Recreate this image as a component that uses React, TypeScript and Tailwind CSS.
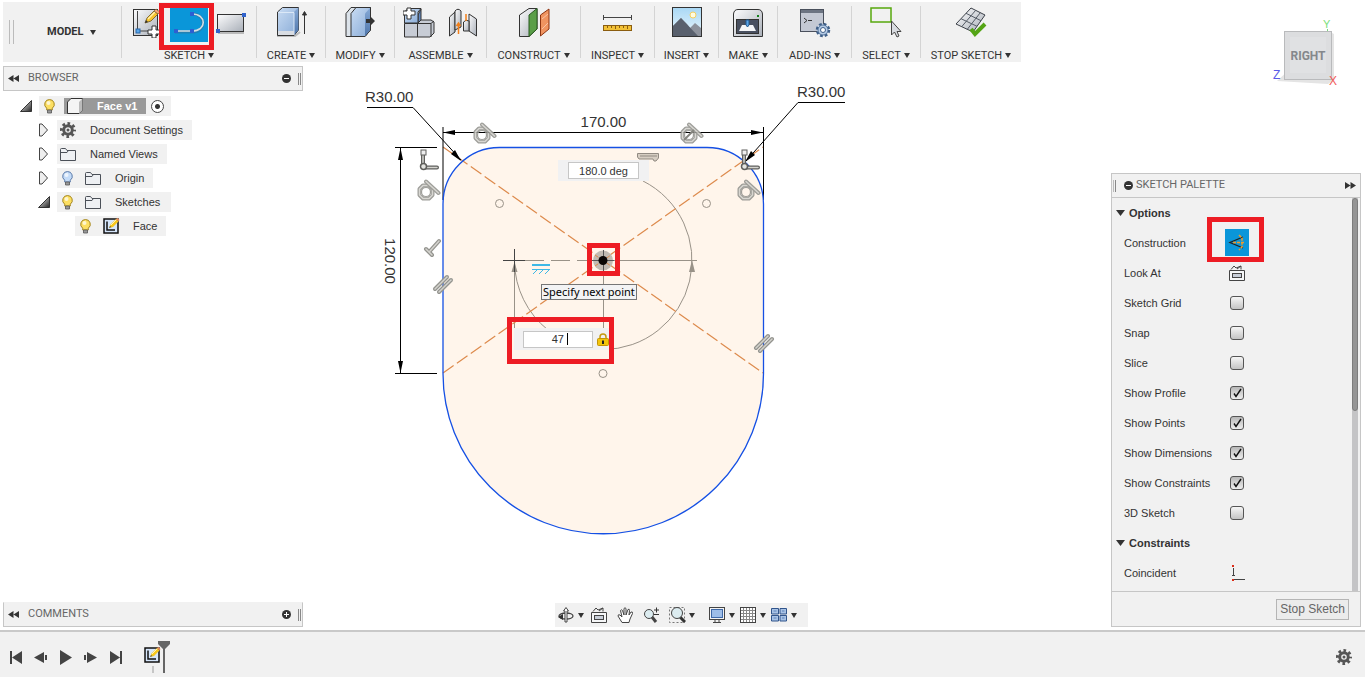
import type { ReactNode } from "react";

function Caret() {
  return (
    <svg width="6" height="5" viewBox="0 0 6 5" className="shrink-0">
      <path d="M0 0H6L3 5Z" fill="#333" />
    </svg>
  );
}

function Gradients() {
  return (
    <svg width="0" height="0" className="absolute">
      <defs>
        <linearGradient id="steel" x1="0" y1="0" x2="1" y2="1">
          <stop offset="0" stopColor="#fdfdfe" />
          <stop offset="1" stopColor="#a9afb8" />
        </linearGradient>
        <linearGradient id="blue" x1="0" y1="0" x2="1" y2="1">
          <stop offset="0" stopColor="#c9dcf3" />
          <stop offset="1" stopColor="#87aad6" />
        </linearGradient>
        <linearGradient id="blueSide" x1="0" y1="0" x2="0" y2="1">
          <stop offset="0" stopColor="#86a9d6" />
          <stop offset="1" stopColor="#4f76ab" />
        </linearGradient>
        <linearGradient id="dark" x1="0" y1="0" x2="1" y2="1">
          <stop offset="0" stopColor="#fff" />
          <stop offset="1" stopColor="#222" />
        </linearGradient>
        <linearGradient id="sky" x1="0" y1="0" x2="0" y2="1">
          <stop offset="0" stopColor="#a9d8f5" />
          <stop offset="1" stopColor="#eaf6fc" />
        </linearGradient>
      </defs>
    </svg>
  );
}

function Pencil() {
  return (
    <g>
      <path d="M0 12L2 7L9 0L13 3L6 10Z" fill="#f7c52d" stroke="#6b5320" strokeWidth=".8" />
      <path d="M3 8L10 1" stroke="#fff0b0" strokeWidth="1.4" />
      <path d="M9 0L11 -2L15 1L13 3Z" fill="#f2a877" stroke="#6b5320" strokeWidth=".6" />
      <path d="M0 12L1 9L3 11Z" fill="#333" />
    </g>
  );
}

function NewSketchIcon() {
  return (
    <svg width="28" height="32" viewBox="0 0 28 32" className="shrink-0">
      <rect x="1.5" y="3.5" width="24" height="26" fill="url(#steel)" stroke="#333" />
      <path d="M5.500 5V25H18" fill="none" stroke="#444" />
      <rect x="4" y="23" width="4" height="4" fill="#58a6ea" stroke="#2866a8" />
      <g transform="translate(13 5)"><Pencil /></g>
      <path d="M20 20h4v4h4v4h-4v4h-4v-4h-4v-4h4z" fill="#fff" stroke="#333" />
    </svg>
  );
}

function LineIcon() {
  return (
    <svg width="38" height="34" viewBox="0 0 38 34">
      <path d="M5 24H23C36 24 37 6 22 6" fill="none" stroke="#44627a" strokeWidth="3" opacity=".4" />
      <path d="M5 23H22C37 23 37 6 22 6" fill="none" stroke="#d5dde2" strokeWidth="1.6" />
      <g fill="#2d5fd2">
        <rect x="4" y="21" width="4" height="4" />
        <rect x="20" y="21" width="4" height="4" />
        <rect x="20" y="4" width="4" height="4" />
      </g>
    </svg>
  );
}

function RectangleIcon() {
  return (
    <svg width="30" height="32" viewBox="0 0 30 32" className="shrink-0">
      <rect x="2" y="26" width="26" height="2" fill="#bbb" />
      <rect x="1.500" y="8.500" width="26" height="17" fill="url(#steel)" stroke="#333" />
      <rect x="0" y="23" width="4" height="4" fill="#3163cc" />
      <rect x="26" y="7" width="4" height="4" fill="#3163cc" />
    </svg>
  );
}

const createIcon = (
  <>
    <path d="M2 30H20L25 26" stroke="#bbb" strokeWidth="2" fill="none" />
    <path d="M2.500 6L7.500 1.500H23.500V24L19 29.500H2.500Z" fill="url(#blue)" stroke="#333" />
    <path d="M19 6L23.500 1.500V24L19 29Z" fill="url(#blueSide)" />
    <path d="M3 6.500H19V29" fill="none" stroke="#dbe8f7" />
    <path d="M3 25H19V29H3Z" fill="#d9dde3" />
    <path d="M29.500 28V6M27.500 9L29.500 5.500L31.500 9Z" stroke="#333" fill="#333" />
  </>
);

const modifyIcon = (
  <>
    <path d="M2 7.500L7 1.500H26.500V24L21 30.500H2Z" fill="#dce3ea" stroke="#333" />
    <path d="M7 7.500L12 1.500H26.500V24L21 30.500H7Z" fill="url(#blue)" stroke="#333" />
    <path d="M21 7.500L26 2V24L21 30Z" fill="url(#blueSide)" />
    <path d="M22 13H26V10L31 15L26 20V17H22Z" fill="#333" />
  </>
);

const assembleIcon = (
  <>
    <path d="M1.500 17.500L5 14H28L31 16V27L27 31H1.500Z" fill="#c7ccd5" stroke="#333" />
    <path d="M14.500 17.500H28L31 15M14.500 17V31M28 18V31M2 17.500H14" fill="none" stroke="#333" />
    <path d="M15 17V9L18 3V14Z" fill="#6389bf" stroke="#333" />
    <path d="M1.500 6L5 2.500H18L15 6V17H1.500Z" fill="url(#blue)" stroke="#333" />
    <path d="M4 2h4v3h4v4H8v4H4V9H0V5h4z" fill="#fff" stroke="#333" />
  </>
);

const jointIcon = (
  <>
    <path d="M2.500 11L8 6V26L2.500 30Z" fill="url(#steel)" stroke="#333" />
    <path d="M8 5Q11 1.500 14 5V21L8 24Z" fill="url(#steel)" stroke="#333" />
    <path d="M22 8L29.500 13V30L22 25Z" fill="url(#steel)" stroke="#333" />
    <path d="M16.500 16Q19 13 22 15V25H16.500Z" fill="url(#steel)" stroke="#333" />
    <path d="M11.500 28V17M9.500 20L11.500 17L13.500 20M19 15V8" stroke="#f27f19" strokeWidth="1.500" fill="none" />
  </>
);

const constructIcon = (
  <>
    <path d="M1.500 9L11 2.500H19V23L11 30.500H1.500Z" fill="url(#steel)" stroke="#333" />
    <path d="M11 9L19 2.500V23L11 30.500Z" fill="#5a9e48" stroke="#285a20" />
    <path d="M22.500 9L31 3V23L22.500 30Z" fill="#f09460" stroke="#8e3512" />
    <path d="M24 13L30 8M24 23L30 17" stroke="#f9c3a4" />
  </>
);

const inspectIcon = (
  <>
    <path d="M1.500 9V14M29.500 9V14M2 11.500H29" stroke="#444" />
    <rect x="1.500" y="19.500" width="28" height="5" fill="#f2c136" stroke="#8b5d10" />
    <path d="M5.500 20v2M9.500 20v2M13.500 20v3M17.500 20v2M21.500 20v2M25.500 20v3" stroke="#8b5d10" />
  </>
);

const insertIcon = (
  <>
    <rect x="1.500" y="1.500" width="29" height="29" fill="url(#sky)" stroke="#333" />
    <circle cx="22" cy="9" r="3" fill="#fffbe0" stroke="#f5cf62" />
    <path d="M2 20L10 12L16 18L19 22L24 17L30 22V30H2Z" fill="#8d929c" />
    <path d="M2 20L10 12L27 30H2Z" fill="#59606d" />
  </>
);

const makeIcon = (
  <>
    <path d="M1.500 8Q2 3.500 6 3.500H26Q30 3.500 30.500 8V30.500H1.500Z" fill="url(#steel)" stroke="#333" />
    <rect x="4.500" y="13.500" width="22" height="14" fill="#495060" stroke="#333" />
    <path d="M7 25L10 19H21L24 25Z" fill="#f5f6f8" />
    <path d="M14 14H17V19L15.500 21L14 19Z" fill="#5aa5e8" stroke="#23598f" />
    <rect x="25" y="9" width="2" height="2" fill="#15821c" />
  </>
);

const addInsIcon = (
  <>
    <rect x="1.500" y="3.500" width="23" height="22" fill="#c4c9d4" stroke="#4a505c" />
    <rect x="2" y="4" width="22" height="3" fill="#6c7482" />
    <path d="M5 12L8 14.500L5 17M9 14.500H13" stroke="#333" fill="none" />
    <circle cx="24" cy="24" r="6" fill="#c9dcf2" stroke="#3f5f88" strokeWidth="2.500" strokeDasharray="2.700 2.012" />
    <circle cx="24" cy="24" r="5" fill="#b5cbe6" stroke="#3f5f88" strokeWidth=".8" />
    <circle cx="24" cy="24" r="2.500" fill="#fff" stroke="#3f5f88" />
  </>
);

const selectIcon = (
  <>
    <rect x="1" y="2" width="20" height="14" fill="none" stroke="#57a80d" strokeWidth="1.500" />
    <path d="M21.500 15V29L24.500 26L27 31L29 30L27 25.500H31Z" fill="#d9dce1" stroke="#444" />
  </>
);

const stopSketchIcon = (
  <>
    <path d="M1 18L16 2L30 9L18 26Z" fill="url(#steel)" stroke="#3b4048" />
    <path d="M6 12.700L22 20.300M11 7.300L26 14.700M6.700 20.700L20.700 4.300M12.300 23.300L25.300 6.700" stroke="#555c66" />
    <path d="M16 23L20 28L30 18" fill="none" stroke="#54a415" strokeWidth="4" />
  </>
);

type ToolGroup = { label: string; width: string; icons: ReactNode[] };

const toolGroups: ToolGroup[] = [
  { label: "CREATE", width: "w-[68px]", icons: [createIcon] },
  { label: "MODIFY", width: "w-[68px]", icons: [modifyIcon] },
  { label: "ASSEMBLE", width: "w-[91px]", icons: [assembleIcon, jointIcon] },
  { label: "CONSTRUCT", width: "w-[93px]", icons: [constructIcon] },
  { label: "INSPECT", width: "w-[73px]", icons: [inspectIcon] },
  { label: "INSERT", width: "w-[63px]", icons: [insertIcon] },
  { label: "MAKE", width: "w-[58px]", icons: [makeIcon] },
  { label: "ADD-INS", width: "w-[73px]", icons: [addInsIcon] },
  { label: "SELECT", width: "w-[68px]", icons: [selectIcon] },
  { label: "STOP SKETCH", width: "w-[100px]", icons: [stopSketchIcon] },
];

function Divider() {
  return <span className="my-1 w-px shrink-0 bg-[#d4d4d4]" />;
}

function GroupLabel({ label }: { label: string }) {
  return (
    <button className="flex items-center gap-[3px] whitespace-nowrap font-[Roboto,sans-serif] text-[11px] leading-[13px] text-[#333]">
      {label}
      <Caret />
    </button>
  );
}

function Toolbar() {
  return (
    <header className="flex pt-[2px] pl-[3px]">
      <div className="flex h-[60px] bg-[#f1f1f1]">
        <div className="flex w-[118px] items-center gap-[33px] pl-1.5">
          <span className="flex h-6 w-[5px] justify-between border-x border-[#bbb]" />
          <button className="flex items-center gap-1.5 font-[Roboto,sans-serif] text-[11px] font-bold text-[#333]">
            MODEL
            <Caret />
          </button>
        </div>
        <Divider />
        <div className="flex w-[134px] flex-col items-center justify-between pt-1">
          <div className="flex items-start">
            <button aria-label="Create sketch"><NewSketchIcon /></button>
            <button aria-label="Line" className="relative mt-[2px] mr-2 ml-[10px] bg-[#0a96d9]">
              <LineIcon />
              <span className="absolute -top-[5px] -left-[11px] h-[47px] w-[55px] border-5 border-[#ed1c24]" />
            </button>
            <button aria-label="Rectangle"><RectangleIcon /></button>
          </div>
          <GroupLabel label="SKETCH" />
        </div>
        {toolGroups.map((group) => (
          <div key={group.label} className="flex">
            <Divider />
            <div className={`flex flex-col items-center justify-between pt-1 ${group.width}`}>
              <div className="flex gap-3">
                {group.icons.map((icon, i) => (
                  <button key={i} aria-label={group.label}>
                    <svg width="32" height="32" viewBox="0 0 32 32">{icon}</svg>
                  </button>
                ))}
              </div>
              <GroupLabel label={group.label} />
            </div>
          </div>
        ))}
      </div>
    </header>
  );
}

function ViewCube() {
  return (
    <svg width="80" height="80" viewBox="1265 15 80 80" className="absolute top-[15px] right-5" fontFamily="Liberation Sans, sans-serif">
      <path d="M1277 81L1328 84L1334 80V34L1330 32Z" fill="#e4e4e4" />
      <path d="M1327.500 31V29" stroke="#7fd67f" />
      <rect x="1284.500" y="31.500" width="47" height="48" fill="#dcdddf" stroke="#b9babc" />
      <rect x="1290" y="37" width="36" height="36" fill="#e0e1e3" />
      <text x="1308" y="60" textAnchor="middle" fontFamily="Roboto, sans-serif" fontSize="12" fontWeight="bold" fill="#85888c">RIGHT</text>
      <text x="1323" y="28" fontSize="11" fill="#7be07b">Y</text>
      <text x="1273" y="79" fontSize="12" fill="#5a5ae8">Z</text>
      <text x="1329" y="85" fontSize="12" fill="#f25a5a">X</text>
    </svg>
  );
}

function ToggleDot({ plus }: { plus: boolean }) {
  return (
    <svg width="9" height="9" viewBox="0 0 9 9">
      <circle cx="4.500" cy="4.500" r="4.500" fill="#333" />
      <path d={plus ? "M2 4.500H7M4.500 2V7" : "M2 4.500H7"} stroke="#fff" />
    </svg>
  );
}

function PanelHeader({ title, expanded }: { title: string; expanded: boolean }) {
  return (
    <div className={`flex h-[25px] items-center border border-[#c6c6c6] bg-[#f1f1f1] pr-px pl-1 ${expanded ? "" : "border-t-[#f1f1f1]"}`}>
      <svg width="11" height="7" viewBox="0 0 11 7">
        <path d="M5.500 0V7L0 3.500ZM11 0V7L5.500 3.500Z" fill="#333" />
      </svg>
      <h2 className="ml-[9px] flex-1 font-[Roboto,sans-serif] text-[11px] text-[#666]">{title}</h2>
      <button aria-label={expanded ? "Collapse" : "Expand"}>
        <ToggleDot plus={!expanded} />
      </button>
      <span className="ml-[7px] h-3 w-[3px] border-x border-[#888]" />
    </div>
  );
}

function Bulb({ on }: { on: boolean }) {
  return (
    <svg width="11" height="15" viewBox="0 0 11 15" className="shrink-0">
      <path d="M5.500 .5a4.800 4.800 0 0 1 2.800 8.700V11H2.700V9.200A4.800 4.800 0 0 1 5.500 .5Z" fill={on ? "#fcdf62" : "#c3dbf8"} stroke={on ? "#a48622" : "#5c7ba8"} />
      <circle cx="4.500" cy="4" r="2" fill="#fff" opacity=".7" />
      <path d="M3.500 11h4v3h-4z" fill="#999" stroke="#555" strokeWidth=".8" />
    </svg>
  );
}

function Folder() {
  return (
    <svg width="16" height="13" viewBox="0 0 16 13" className="shrink-0">
      <path d="M.5 12.500V1.500Q.5 .5 1.500 .5H5.500L7 2.500H15.500V12.500Z" fill="#eef0f3" stroke="#4b5058" />
      <path d="M1 4.500H7L8 3" fill="none" stroke="#4b5058" />
    </svg>
  );
}

function Gear() {
  return (
    <svg width="16" height="16" viewBox="0 0 16 16" className="shrink-0">
      <circle cx="8" cy="8" r="6.500" fill="none" stroke="#555" strokeWidth="3" strokeDasharray="2.600 2.505" strokeDashoffset="1.300" />
      <circle cx="8" cy="8" r="4.300" fill="none" stroke="#555" strokeWidth="3" />
      <circle cx="8" cy="8" r="1.500" fill="#555" />
    </svg>
  );
}

function SketchGlyph() {
  return (
    <g>
      <rect x="1" y="2" width="14" height="14" fill="#d6e6fb" stroke="#111" strokeWidth="1.500" />
      <path d="M4 4.500V13H12" fill="none" stroke="#111" strokeWidth="1.500" />
      <path d="M6 11L7.500 7.500L13 2L15.500 4.500L10 10Z" fill="#f8c81c" />
      <path d="M8 8L13.500 2.500" stroke="#fff3b8" />
      <path d="M13 2L14.500 1L16.500 3L15.500 4.500Z" fill="#e98b5a" />
      <path d="M6 11L7 9L8.500 10Z" fill="#555" />
    </g>
  );
}

function BodyIcon() {
  return (
    <svg width="16" height="16" viewBox="0 0 16 16" className="shrink-0">
      <path d="M.5 4L4 .5H15.500V12L12 15.500H.5Z" fill="#f4f4f4" stroke="#333" />
      <path d="M12 4L15.500 .5V12L12 15.500Z" fill="#bbb" />
    </svg>
  );
}

function TreeArrow({ open }: { open: boolean }) {
  return (
    <svg width="12" height="14" viewBox="0 0 12 14" className="shrink-0">
      {open ? (
        <path d="M11.500 1.500V12.500H.5Z" fill="url(#dark)" stroke="#333" />
      ) : (
        <path d="M1.500 1V13H4L9.500 7L4 1Z" fill="#eee" stroke="#444" />
      )}
    </svg>
  );
}

function Browser() {
  return (
    <section>
      <PanelHeader title="BROWSER" expanded />
      <ul className="mt-[5px] flex flex-col gap-1 text-[11px] text-[#333]">
        <li className="flex h-5 items-center gap-[7px] pl-[17px]">
          <TreeArrow open />
          <div className="flex h-5 items-center bg-[#f1f1f1] pr-[7px] pl-[5px]">
            <Bulb on />
            <span className="mr-[5px] ml-[9px] flex h-4 items-center gap-[14px] bg-[#999] pr-[9px] pl-[3px] font-bold text-white">
              <BodyIcon />
              Face v1
            </span>
            <input type="radio" name="active" aria-label="Activate Face v1" defaultChecked className="size-[13px] appearance-none rounded-full border border-[#444] bg-white bg-[radial-gradient(circle,#333_0_2px,transparent_3px)]" />
          </div>
        </li>
        <li className="flex h-5 items-center gap-[7px] pl-[35px]">
          <TreeArrow open={false} />
          <div className="flex h-5 items-center gap-[14px] bg-[#f1f1f1] pr-[9px] pl-[3px]"><Gear />Document Settings</div>
        </li>
        <li className="flex h-5 items-center gap-[7px] pl-[35px]">
          <TreeArrow open={false} />
          <div className="flex h-5 items-center gap-[14px] bg-[#f1f1f1] pr-[9px] pl-[3px]"><Folder />Named Views</div>
        </li>
        <li className="flex h-5 items-center gap-[7px] pl-[35px]">
          <TreeArrow open={false} />
          <div className="flex h-5 items-center gap-3 bg-[#f1f1f1] pr-[9px] pl-[5px]"><Bulb on={false} /><Folder /><span className="ml-0.5">Origin</span></div>
        </li>
        <li className="flex h-5 items-center gap-[7px] pl-[35px]">
          <TreeArrow open />
          <div className="flex h-5 items-center gap-3 bg-[#f1f1f1] pr-[11px] pl-[5px]"><Bulb on /><Folder /><span className="ml-0.5">Sketches</span></div>
        </li>
        <li className="flex h-5 items-center pl-[72px]">
          <div className="flex h-5 items-center gap-3 bg-[#f1f1f1] pr-[9px] pl-[5px]">
            <Bulb on />
            <svg width="18" height="18" viewBox="0 0 18 18" className="shrink-0"><SketchGlyph /></svg>
            Face
          </div>
        </li>
      </ul>
    </section>
  );
}

// Constraint markers are drawn as a grey band with a lighter core.
function Marker({ d, color = "#94948f" }: { d: string; color?: string }) {
  return (
    <g fill="none" strokeLinecap="round" strokeLinejoin="round">
      <path d={d} stroke={color} strokeWidth="4" />
      <path d={d} stroke="#d4d3ce" strokeWidth="1.500" />
    </g>
  );
}

function Tangent({ x, y }: { x: number; y: number }) {
  return (
    <g transform={`translate(${x} ${y})`} opacity=".9">
      <Marker d="M-3 -6.500H3L6.500 -3V3L3 6.500H-3L-6.500 3V-3Z" />
      <circle r="4.500" fill="none" stroke="#94948f" strokeWidth="1.200" />
      <Marker d="M0 -10.500L12.500 1" />
    </g>
  );
}

function Perpendicular({ x }: { x: number }) {
  return (
    <g transform={`translate(${x} 149)`}>
      <Marker d="M3 3V15M5 18.500H17" color="#5f5f5c" />
      <rect x="1" y="1" width="5" height="5" fill="#eee" stroke="#5f5f5c" />
      <circle cx="3.500" cy="17.500" r="3" fill="#e4e4e0" stroke="#5f5f5c" strokeWidth="1.500" />
    </g>
  );
}

function SketchCanvas() {
  return (
    <div className="relative h-[470px] w-[500px]">
      <svg width="500" height="470" viewBox="355 75 500 470" fontFamily="Liberation Sans, sans-serif" fontSize="15" fill="#333">
        <path d="M443 204A56.500 56.500 0 0 1 499.500 147.500H707A56.500 56.500 0 0 1 763.500 204V373.500A160.250 160.250 0 0 1 443 373.500Z" fill="#fff5eb" />

        <g stroke="#999288" fill="none">
          <path d="M643 181A89 89 0 0 1 603 349.500M514.500 262A89 89 0 0 0 548 330M603 260.500H697M514.500 272V330M603.500 276V330" />
          <path d="M525 260.500H603" strokeDasharray="19 7" />
          <circle cx="499.500" cy="203.500" r="4" />
          <circle cx="706.500" cy="203.500" r="4" />
          <circle cx="603" cy="373.500" r="4" />
        </g>
        <path d="M692 260L689 272H695ZM514.500 262L511.500 272H517.500Z" fill="#999288" />
        <path d="M503 260.500H525M514.500 249V272" stroke="#444" />

        <g stroke="#dd8a4c" strokeWidth="1.200" strokeDasharray="13 4">
          <path d="M443 147L763 373" />
          <path d="M443 373L763 147" />
        </g>

        <g stroke="#000" fill="none">
          <path d="M443 127V200M763.500 127V200M443 132.500H763M400.500 148V373M395 147.500H437M395 373.500H437" />
          <path d="M367 107.500H413L461 160M845 102.500H798L746 161" />
        </g>
        <path d="M443 132.500L455 130V135ZM763 132.500L751 130V135ZM400.500 148L398 160H403ZM400.500 373L398 361H403ZM461 161L451 154L455 150ZM745 162L751 151L755 155Z" fill="#000" />

        <path d="M443 204A56.500 56.500 0 0 1 499.500 147.500H707A56.500 56.500 0 0 1 763.500 204V373.500A160.250 160.250 0 0 1 443 373.500Z" fill="none" stroke="#1550e4" strokeWidth="1.300" />

        <text x="365" y="102">R30.00</text>
        <text x="797" y="97">R30.00</text>
        <text x="603.500" y="127" textAnchor="middle">170.00</text>
        <text transform="translate(385 261) rotate(90)" textAnchor="middle">120.00</text>

        <Tangent x={482} y={135} />
        <Tangent x={689} y={135} />
        <path d="M684 140L694 130" stroke="#85857f" strokeWidth="2" />
        <Tangent x={426} y={192} />
        <Tangent x={746} y={192} />
        <Perpendicular x={420} />
        <Perpendicular x={741} />
        <Marker d="M426 249L432 255M430 251L439 241" />
        <Marker d="M435 289L447 277" />
        <Marker d="M439 292L451 280" />
        <Marker d="M756 348L768 336" />
        <Marker d="M760 351L772 339" />
        <path d="M637.500 153.500H658.500V158L656 161H654L653 159H639L637.500 157Z" fill="#d6cdc2" stroke="#918a82" />
        <path d="M640 156H657" stroke="#918a82" />

        <g stroke="#3eb8e6" fill="none">
          <path d="M532 265H550" strokeWidth="2" />
          <path d="M532 269.500H550M537 270L533 274M543 270L539 274M549 270L545 274" />
        </g>

        <circle cx="603" cy="260.500" r="10" fill="#c2bbb3" />
        <path d="M595 255L611 266M595 266L611 255" stroke="#dd8a4c" strokeDasharray="4 3" />
        <path d="M592 260.500H614M603.500 250V272" stroke="#555" />
        <circle cx="603" cy="260.500" r="4.500" fill="#0b0705" />
      </svg>

      <div className="absolute top-[85px] left-[203px] flex h-[21px] w-[91px] items-center justify-center bg-[#f1f1f2]">
        <input aria-label="Angle" defaultValue="180.0 deg" className="h-[17px] w-[71px] border border-[#c6c6c6] bg-white text-center text-[11px] text-[#333]" />
      </div>

      <div className="absolute top-[168px] left-[232px] size-[33px] border-5 border-[#ed1c24]" />

      <div role="tooltip" className="absolute top-[209px] left-[186px] flex h-4 items-center border border-[#767676] bg-[#f3f3f4] px-px font-['Noto_Sans',sans-serif] text-[11px] whitespace-nowrap text-black">
        Specify next point
      </div>

      <div className="absolute top-[242px] left-[152px] h-[47px] w-[107px] border-5 border-[#ed1c24] pt-1.5 pl-[2px]">
        <div className="flex h-[22px] items-center bg-[#f1f1f2] pl-[9px]">
          <div className="flex h-[17px] w-[70px] shrink-0 items-center border border-[#c6c6c6] bg-white">
            <input aria-label="Length" defaultValue="47" className="h-[15px] w-10 text-right text-[11px] text-[#333]" />
            <span className="ml-[3px] h-3 w-px bg-black" />
          </div>
          <svg width="12" height="13" viewBox="0 0 12 13" className="ml-1 shrink-0">
            <path d="M3 6V4a3 3 0 0 1 6 0V6" fill="none" stroke="#c59a12" strokeWidth="1.500" />
            <rect x=".5" y="5.500" width="11" height="7" rx="1" fill="#f2c50c" stroke="#c39408" />
            <path d="M6 7.500V11" stroke="#222" strokeWidth="2" />
          </svg>
        </div>
      </div>
    </div>
  );
}

function NavButton({ label, menu, children }: { label: string; menu?: boolean; children: ReactNode }) {
  return (
    <button aria-label={label} className="flex items-center gap-[3px]">
      <svg width="17" height="16" viewBox="0 0 17 16">{children}</svg>
      {menu && <Caret />}
    </button>
  );
}

const lookAt = (
  <>
    <path d="M.5 5.500H15.500V15.500H.5Z" fill="#f6f7f8" stroke="#444" />
    <rect x="3.500" y="8.500" width="9" height="4" fill="#c8ced8" stroke="#444" />
    <path d="M2 4.500L5 1L7 3L12 1V4.500M8 4L12 1" fill="none" stroke="#444" />
  </>
);

function NavBar() {
  return (
    <div className="flex h-6 w-[253px] items-center bg-[#f1f1f1] pr-3 pl-[3px]">
      <div className="flex items-center gap-[7px]">
        <NavButton label="Orbit" menu>
          <ellipse cx="8" cy="9" rx="7" ry="3" fill="none" stroke="#444" strokeWidth="1.300" />
          <path d="M7 15V4H5.500L8 .5L10.500 4H9V15Z" stroke="#444" fill="#fff" />
          <path d="M0 10L5 7V13Z" fill="#333" />
        </NavButton>
        <NavButton label="Look at">{lookAt}</NavButton>
      </div>
      <div className="ml-[9px] flex items-center gap-[9px]">
        <NavButton label="Pan">
          <path d="M5 15.500L1 9Q1 7 3 8L5 10L3.500 3.500Q4 2 5.500 3.500L7 8V1.500Q8 0 9 1.500V8L11 2.500Q12.500 1.500 12.500 3.500L12 8L14 5Q16 4.500 15.500 6.500L13 12L12 15.500Z" fill="#fff" stroke="#444" />
        </NavButton>
        <NavButton label="Zoom">
          <path d="M9 10L13 15" stroke="#444" strokeWidth="3" />
          <circle cx="6" cy="7" r="4.500" fill="#dcecf0" stroke="#444" />
          <path d="M11 3H16M13.500 .5V5.500M11 7.500H16" stroke="#333" />
        </NavButton>
        <NavButton label="Fit" menu>
          <rect x=".5" y=".5" width="15" height="15" fill="none" stroke="#777" strokeDasharray="2 2" />
          <path d="M11 10L16 15" stroke="#333" strokeWidth="3" />
          <circle cx="8" cy="6" r="5.500" fill="#dcecf0" stroke="#444" />
        </NavButton>
      </div>
      <div className="ml-3.5 flex items-center gap-[5px]">
        <NavButton label="Display settings" menu>
          <rect x=".5" y=".5" width="15" height="12" fill="#f3f3f3" stroke="#444" />
          <rect x="2.500" y="2.500" width="11" height="8" fill="#9dbde8" stroke="#3f69a8" />
          <path d="M6 13V15M10 13V15M4 15.500H12" stroke="#444" />
        </NavButton>
        <NavButton label="Grid and snaps" menu>
          <rect x=".5" y=".5" width="15" height="15" fill="#fff" stroke="#444" />
          <path d="M3.500 1V15M6.500 1V15M9.500 1V15M12.500 1V15M1 3.500H15M1 6.500H15M1 9.500H15M1 12.500H15" stroke="#888" />
        </NavButton>
        <NavButton label="Viewports" menu>
          <path d="M.5 1.500H7.500V7H.5ZM9 1.500H15.500V7H9ZM.5 8.500H7.500V14H.5ZM9 8.500H15.500V14H9Z" fill="#a9c3e6" stroke="#31558c" />
          <path d="M2.500 4H5.500M11 4H13.500M2.500 11H5.500M11 11H13.500" stroke="#5c82b8" />
        </NavButton>
      </div>
    </div>
  );
}

const options = [
  { label: "Sketch Grid", checked: false },
  { label: "Snap", checked: false },
  { label: "Slice", checked: false },
  { label: "Show Profile", checked: true },
  { label: "Show Points", checked: true },
  { label: "Show Dimensions", checked: true },
  { label: "Show Constraints", checked: true },
  { label: "3D Sketch", checked: false },
];

function SectionTitle({ children }: { children: ReactNode }) {
  return (
    <h3 className="flex h-[30px] items-center gap-1 pl-1 text-[11px] font-bold text-[#333]">
      <svg width="9" height="6" viewBox="0 0 9 6"><path d="M0 0H9L4.500 6Z" fill="#333" /></svg>
      {children}
    </h3>
  );
}

function PaletteRow({ label, children }: { label: string; children: ReactNode }) {
  return (
    <label className="flex h-[30px] items-center pl-3">
      <span className="w-[98px]">{label}</span>
      <span className="grid w-[30px] place-items-center pb-px">{children}</span>
    </label>
  );
}

function CheckBox({ checked }: { checked: boolean }) {
  return (
    <span className="grid place-items-center">
      <input
        type="checkbox"
        defaultChecked={checked}
        className="peer col-start-1 row-start-1 size-[14px] appearance-none rounded-[3px] border border-[#555] bg-linear-to-b from-[#f6f6f6] to-[#c4c4c4] checked:from-[#b8b8b8] checked:to-[#eee]"
      />
      <svg width="9" height="10" viewBox="0 0 9 10" className="pointer-events-none invisible col-start-1 row-start-1 peer-checked:visible">
        <path d="M1 5.500L3 8.500L8 1" fill="none" stroke="#111" strokeWidth="1.400" />
      </svg>
    </span>
  );
}

function SketchPalette() {
  return (
    <section className="flex flex-col border border-[#c6c6c6] bg-[#f1f1f1] text-[11px] text-[#333]">
      <div className="flex h-6 items-center border-b border-[#c6c6c6] pr-1 pl-px">
        <span className="mr-2 h-3 w-[3px] border-r border-l border-r-[#888] border-l-[#bbb]" />
        <button aria-label="Collapse palette"><ToggleDot plus={false} /></button>
        <h2 className="ml-[3px] flex-1 font-[Roboto,sans-serif] text-[#666]">SKETCH PALETTE</h2>
        <svg width="11" height="7" viewBox="0 0 11 7"><path d="M0 0V7L5.500 3.500ZM5.500 0V7L11 3.500Z" fill="#333" /></svg>
      </div>
      <div className="flex h-[393px]">
        <div className="flex-1">
          <SectionTitle>Options</SectionTitle>
          <PaletteRow label="Construction">
            <button aria-label="Construction" className="relative bg-[#0a96d9]">
              <svg width="24" height="27" viewBox="0 0 24 27">
                <path d="M18 8L5 13.500L18 19" fill="none" stroke="#222" strokeWidth="1.300" />
                <path d="M8 13.500H20M14 6L17 9V18L14 21" fill="none" stroke="#f09a28" strokeWidth="1.500" strokeDasharray="3 1" />
              </svg>
              <span className="absolute -top-[12px] -left-[18px] h-[45px] w-[57px] border-5 border-[#ed1c24]" />
            </button>
          </PaletteRow>
          <PaletteRow label="Look At">
            <button aria-label="Look At"><svg width="17" height="16" viewBox="0 0 17 16">{lookAt}</svg></button>
          </PaletteRow>
          {options.map((option) => (
            <PaletteRow key={option.label} label={option.label}>
              <CheckBox checked={option.checked} />
            </PaletteRow>
          ))}
          <SectionTitle>Constraints</SectionTitle>
          <PaletteRow label="Coincident">
            <button aria-label="Coincident">
              <svg width="15" height="16" viewBox="0 0 15 16">
                <path d="M3.500 3V11M2 10.500H5M4 14.500H15" stroke="#444" />
                <path d="M2 0H4V2H2ZM2 14H4V16H2Z" fill="#dd2b16" />
              </svg>
            </button>
          </PaletteRow>
        </div>
        <div className="mr-[2px] w-1.5 bg-[#c4c4c6]">
          <div className="h-[213px] rounded-full border border-[#7d7d7d] bg-[#959595]" />
        </div>
      </div>
      <div className="flex h-[35px] items-center justify-end border-t border-[#c6c6c6] pr-[11px]">
        <button className="h-[21px] border border-[#b5b5b5] bg-[#ececec] px-[3px] text-xs leading-[19px] text-[#666]">Stop Sketch</button>
      </div>
    </section>
  );
}

const transport = [
  { label: "Go to start", d: "M1 1H3V14H1ZM13 1V14L3 7.500Z" },
  { label: "Step back", d: "M11 5H13V10H11ZM10 2V13L0 7.500Z" },
  { label: "Play", d: "M1 0V15L13 7.500Z" },
  { label: "Step forward", d: "M0 5H2V10H0ZM3 2V13L13 7.500Z" },
  { label: "Go to end", d: "M11 1H13V14H11ZM1 1V14L11 7.500Z" },
];

function Timeline() {
  return (
    <footer className="flex h-[47px] items-center justify-between border-t-2 border-[#c9c9c9] bg-[#f1f1f1] pr-[13px] pl-[9px]">
      <div className="flex items-center pt-[5px]">
        <div className="flex items-center gap-[11px]">
          {transport.map((button) => (
            <button key={button.label} aria-label={button.label}>
              <svg width="14" height="15" viewBox="0 0 14 15">
                <path d={button.d} fill="#444" />
              </svg>
            </button>
          ))}
        </div>
        <svg width="30" height="36" viewBox="143 640 30 36" className="ml-[19px]">
          <path d="M154 667V674" stroke="#c6c6c6" strokeWidth="2" />
          <g transform="translate(145 647)"><SketchGlyph /></g>
          <path d="M159 642H171V645L166 650V674H164V650L159 645Z" fill="#666" />
        </svg>
      </div>
      <button aria-label="Timeline settings" className="pt-1"><Gear /></button>
    </footer>
  );
}

export default function App() {
  return (
    <div className="relative flex min-h-screen flex-col bg-white font-['Liberation_Sans',Arial,sans-serif]">
      <Gradients />
      <Toolbar />
      <ViewCube />
      <main className="flex flex-1 justify-between pr-1 pb-[3px] pl-[3px]">
        <aside className="flex w-[300px] shrink-0 flex-col justify-between pt-1">
          <Browser />
          <PanelHeader title="COMMENTS" expanded={false} />
        </aside>
        <div className="flex flex-1 flex-col justify-between pt-[13px] pl-[52px]">
          <SketchCanvas />
          <div className="pl-[200px]"><NavBar /></div>
        </div>
        <aside className="w-[250px] shrink-0 pt-[111px]">
          <SketchPalette />
        </aside>
      </main>
      <Timeline />
    </div>
  );
}
